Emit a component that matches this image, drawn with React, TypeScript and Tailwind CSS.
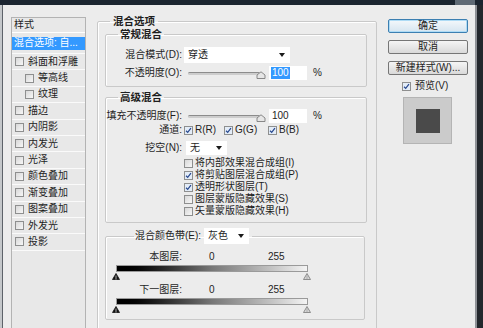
import type { ReactNode } from 'react'

const listItems: { label: string; sub?: boolean }[] = [
  { label: '斜面和浮雕' },
  { label: '等高线', sub: true },
  { label: '纹理', sub: true },
  { label: '描边' },
  { label: '内阴影' },
  { label: '内发光' },
  { label: '光泽' },
  { label: '颜色叠加' },
  { label: '渐变叠加' },
  { label: '图案叠加' },
  { label: '外发光' },
  { label: '投影' },
]

const extraOptions = [
  { label: '将内部效果混合成组(I)', on: false },
  { label: '将剪贴图层混合成组(P)', on: true },
  { label: '透明形状图层(T)', on: true },
  { label: '图层蒙版隐藏效果(S)', on: false },
  { label: '矢量蒙版隐藏效果(H)', on: false },
]

function Check({ on }: { on?: boolean }) {
  return (
    <span
      className={`flex h-[9px] w-[9px] shrink-0 items-center justify-center border border-[#8e8f8f] ${
        on ? 'bg-[#e3ecf7]' : 'bg-linear-to-br from-[#d8d8d8] to-[#f7f7f7]'
      }`}
    >
      {on && (
        <svg viewBox="0 0 8 8" className="h-[7px] w-[7px]">
          <path d="M1.2 4.3 L3.1 6.2 L6.8 1.4" fill="none" stroke="#27488f" strokeWidth="1.4" />
        </svg>
      )}
    </span>
  )
}

function Arrow() {
  return (
    <svg viewBox="0 0 6 4" className="h-[4px] w-[6px]">
      <path d="M0 0 H6 L3 4 Z" fill="#1a1a1a" />
    </svg>
  )
}

function Select({ value, className }: { value: string; className: string }) {
  return (
    <div className={`flex items-center justify-between bg-white pl-[4px] pr-[5px] ${className}`}>
      <span>{value}</span>
      <Arrow />
    </div>
  )
}

function Slider() {
  return (
    <div className="ml-[6px] flex w-[78px] items-center">
      <div className="h-[3px] flex-1 rounded-full border-t border-[#8c8c8c] bg-[#cdcdcd]" />
      <svg viewBox="0 0 10 8" className="-ml-[4px] mt-[3px] h-[8px] w-[10px]">
        <path d="M1 7.5 V4 L5 0.8 L9 4 V7.5 Z" fill="#e6e6e6" stroke="#7d7d7d" strokeWidth="0.9" />
      </svg>
    </div>
  )
}

function Group({ title, children, className }: { title: ReactNode; children: ReactNode; className: string }) {
  return (
    <fieldset className={`rounded-[2px] border border-[#c9c9c9] shadow-[inset_1px_1px_0_#fff] ${className}`}>
      {title}
      {children}
    </fieldset>
  )
}

function Marker({ dark }: { dark?: boolean }) {
  return (
    <svg viewBox="0 0 8 7" className="h-[7px] w-[8px]">
      <path d="M4 0.5 L7.5 6.5 H0.5 Z" fill={dark ? '#111' : '#d8d8d8'} stroke={dark ? '#111' : '#777'} strokeWidth="0.8" />
      <path d="M4 2.5 V6.5" stroke={dark ? '#eee' : '#999'} strokeWidth="0.7" />
    </svg>
  )
}

function Band({ label }: { label: string }) {
  return (
    <>
      <div className="flex h-[12px] items-center">
        <span className="w-[76px] text-right">{label}</span>
        <span className="w-[86px] pl-[27px]">0</span>
        <span>255</span>
      </div>
      <div className="ml-[10px] mt-[2px] h-[7px] w-[192px] border border-[#9a9a9a] bg-linear-to-r from-black via-[#777] to-[#f4f4f4]" />
      <div className="ml-[6px] mt-[1px] flex h-[7px] w-[199px] justify-between">
        <Marker dark />
        <Marker />
      </div>
    </>
  )
}

export default function App() {
  return (
    <div className="flex h-[328px] w-[483px] flex-col overflow-hidden bg-[#1b2530] font-['Liberation_Sans','Noto_Sans_CJK_SC',sans-serif] text-[10px] leading-[12px] text-[#1e1e1e]">
      <div className="flex h-[5px] shrink-0 justify-end">
        <div className="mr-[8px] w-[20px] bg-[#5f6a75]" />
      </div>

      <div className="flex min-h-0 flex-1">
        <div className="w-[3px] shrink-0 border-r border-[#5d6269] bg-[#c4c7ca]" />

        <div className="flex min-w-0 flex-1 bg-[#ececec]">
          {/* effect list */}
          <div className="ml-[8px] mt-[12px] h-[330px] w-[75px] shrink-0 border border-[#b3b3b3] bg-[#e8e8e8]">
            <div className="flex h-[15px] items-center border-b border-white px-[2px]">样式</div>
            <div className="flex h-[21px] items-center border-b border-white/80">
              <div className="flex h-[13px] w-full items-center bg-[#3399ff] px-[2px] text-white">混合选项: 自...</div>
            </div>
            {listItems.map((item) => (
              <div
                key={item.label}
                className={`flex h-[16.4px] items-center border-b border-white/80 ${item.sub ? 'pl-[13px]' : 'pl-[3px]'}`}
              >
                <Check />
                <span className="ml-[4px]">{item.label}</span>
              </div>
            ))}
          </div>

          {/* blending options */}
          <Group
            className="ml-[11px] mt-[10px] h-[330px] w-[280px] shrink-0"
            title={<legend className="ml-[12px] px-[3px] text-[10.5px] font-bold">混合选项</legend>}
          >
            <Group
              className="ml-[7px] mt-[1px] w-[262px] pb-[6px]"
              title={<legend className="ml-[12px] px-[2px] text-[10.5px] font-bold">常规混合</legend>}
            >
              <div className="mt-[7px] flex h-[16px] items-center">
                <span className="w-[76px] text-right">混合模式(D):</span>
                <Select value="穿透" className="ml-[2px] h-[16px] w-[106px]" />
              </div>
              <div className="mt-[3px] flex h-[14px] items-center">
                <span className="w-[76px] text-right">不透明度(O):</span>
                <Slider />
                <div className="ml-[3px] flex h-[14px] w-[38px] items-center bg-white pl-[2px]">
                  <span className="bg-[#3399ff] px-[1px] text-white">100</span>
                </div>
                <span className="ml-[6px]">%</span>
              </div>
            </Group>

            <Group
              className="ml-[7px] mt-[4px] w-[262px] pb-[5px]"
              title={<legend className="ml-[12px] px-[2px] text-[10.5px] font-bold">高级混合</legend>}
            >
              <div className="mt-[6px] flex h-[14px] items-center">
                <span className="w-[76px] text-right">填充不透明度(F):</span>
                <Slider />
                <div className="ml-[3px] flex h-[14px] w-[38px] items-center bg-white pl-[3px]">100</div>
                <span className="ml-[6px]">%</span>
              </div>
              <div className="mt-[1px] flex h-[12px] items-center">
                <span className="w-[76px] text-right">通道:</span>
                <span className="ml-[2px] flex w-[40px] items-center">
                  <Check on />
                  <span className="ml-[2px]">R(R)</span>
                </span>
                <span className="flex w-[44px] items-center">
                  <Check on />
                  <span className="ml-[2px]">G(G)</span>
                </span>
                <span className="flex items-center">
                  <Check on />
                  <span className="ml-[2px]">B(B)</span>
                </span>
              </div>
              <div className="mt-[5px] flex h-[14px] items-center">
                <span className="w-[76px] text-right">挖空(N):</span>
                <Select value="无" className="ml-[4px] h-[14px] w-[41px]" />
              </div>
              <div className="mt-[2px] flex flex-col">
                {extraOptions.map((opt) => (
                  <div key={opt.label} className="flex h-[12px] items-center pl-[78px]">
                    <Check on={opt.on} />
                    <span className="ml-[2px]">{opt.label}</span>
                  </div>
                ))}
              </div>
            </Group>

            <Group
              className="ml-[7px] mt-[5px] w-[260px] pb-[6px]"
              title={
                <legend className="ml-[28px] flex items-center pl-[1px] pr-[3px]">
                  <span>混合颜色带(E):</span>
                  <Select value="灰色" className="ml-[3px] h-[16px] w-[45px]" />
                </legend>
              }
            >
              <div className="mt-[7px]">
                <Band label="本图层:" />
              </div>
              <div className="mt-[4px]">
                <Band label="下一图层:" />
              </div>
            </Group>
          </Group>

          {/* buttons */}
          <div className="ml-[11px] mt-[14px] flex w-[80px] shrink-0 flex-col">
            <button className="h-[14px] rounded-[2px] border border-[#3c7fb1] bg-linear-to-b from-[#f4f8fb] to-[#d6e5f0] shadow-[inset_0_0_0_1px_#aedbf5]">
              确定
            </button>
            <button className="mt-[7px] h-[14px] rounded-[2px] border border-[#767676] bg-linear-to-b from-[#f5f5f5] to-[#d9d9d9]">
              取消
            </button>
            <button className="mt-[7px] h-[14px] rounded-[2px] border border-[#767676] bg-linear-to-b from-[#f5f5f5] to-[#d9d9d9]">
              新建样式(W)...
            </button>
            <div className="mt-[6px] flex h-[10px] items-center pl-[14px]">
              <Check on />
              <span className="ml-[4px]">预览(V)</span>
            </div>
            <div className="ml-[15px] mt-[6px] flex h-[47px] w-[49px] items-center justify-center border border-[#b4b4b4] bg-[#cbcbcb]">
              <div className="h-[24px] w-[24px] bg-[#4a4a4a]" />
            </div>
          </div>
        </div>

        <div className="w-[8px] shrink-0 border-l-2 border-[#8e9196] bg-[#23272c]" />
      </div>
    </div>
  )
}
